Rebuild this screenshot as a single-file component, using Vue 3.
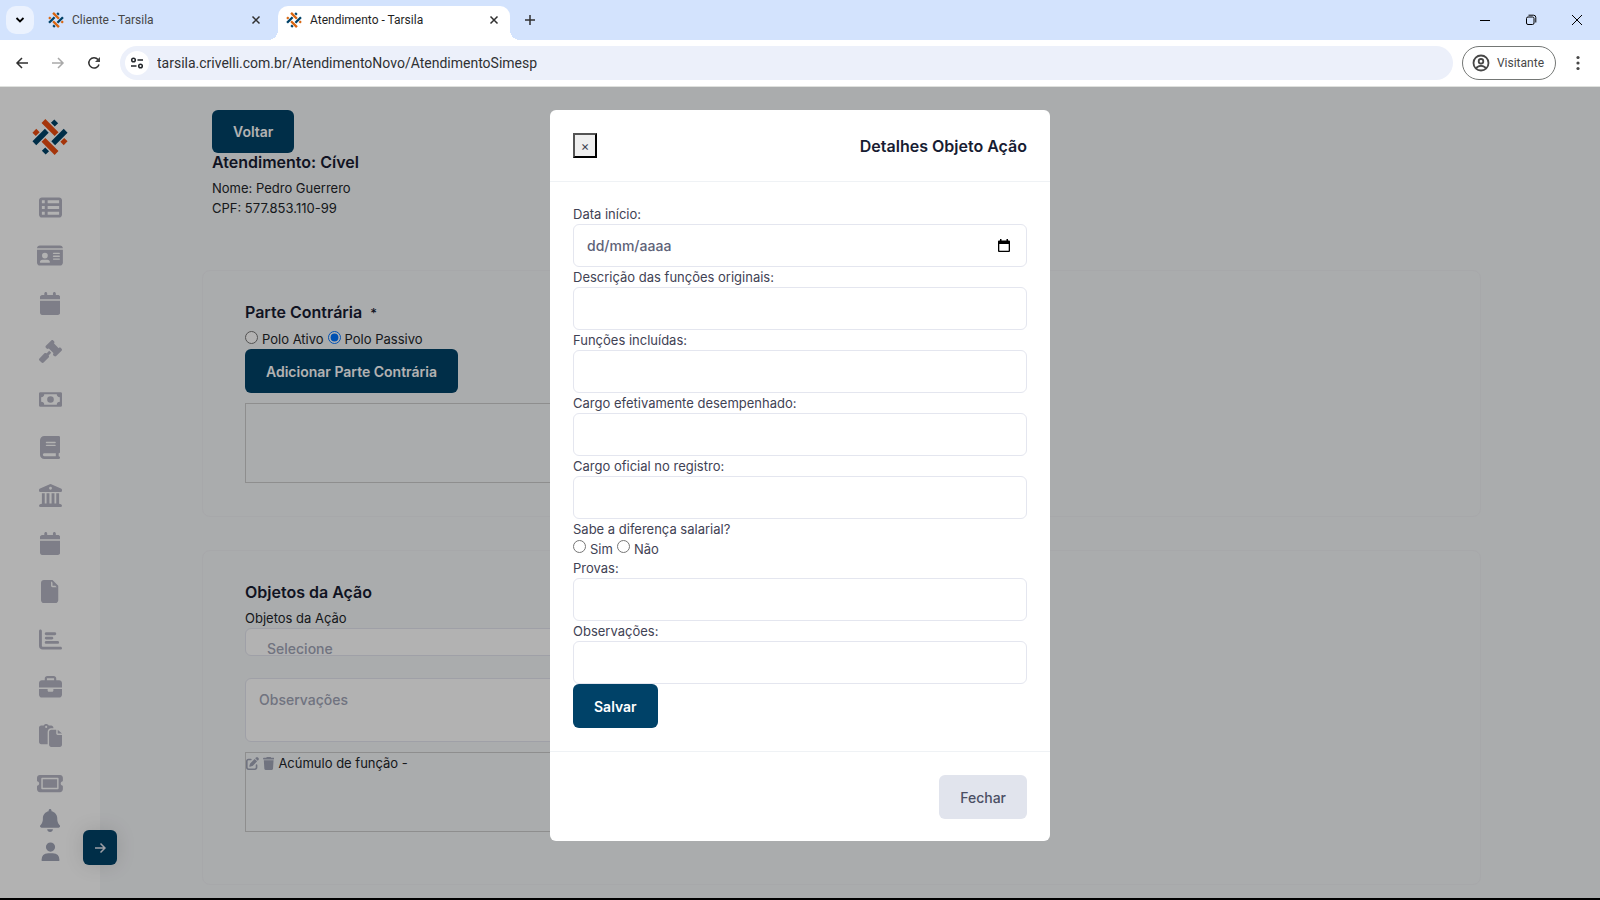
<template>
  <div class="browser">
    <header class="tab-strip">
      <button class="tab-search" type="button" aria-label="Pesquisar guias">
        <svg width="10" height="10" viewBox="0 0 10 10"><path d="M1.500 3L5 6.500L8.500 3" class="stroke thick" /></svg>
      </button>
      <div class="tabs">
        <div v-for="tab in tabs" :key="tab.title" class="tab" :class="{ active: tab.active }">
          <svg class="favicon" viewBox="96 101 105 107">
            <path class="logo-orange" d="M129 107L168 146M129 163L168 202" />
            <path class="logo-blue" d="M102 173L139 136M158 173L195 136" />
            <path class="logo-orange" d="M102 136L112 146M185 163L195 173" />
            <path class="logo-blue" d="M157 118L167 108M130 201L140 191" />
          </svg>
          <span class="tab-title">{{ tab.title }}</span>
          <button class="tab-close" type="button" aria-label="Fechar guia">
            <svg width="10" height="10" viewBox="0 0 10 10"><path d="M1.500 1.500L8.500 8.500M8.500 1.500L1.500 8.500" class="stroke" /></svg>
          </button>
        </div>
      </div>
      <button class="tab-new" type="button" aria-label="Nova guia">
        <svg width="12" height="12" viewBox="0 0 12 12"><path d="M6 1V11M1 6H11" class="stroke" /></svg>
      </button>
      <div class="window-controls">
        <button type="button" aria-label="Minimizar">
          <svg width="12" height="12" viewBox="0 0 12 12"><path d="M1 6.500H11" class="stroke thin" /></svg>
        </button>
        <button type="button" aria-label="Restaurar">
          <svg width="12" height="12" viewBox="0 0 12 12">
            <rect x="1.500" y="3" width="7.500" height="7.500" rx="1.500" class="stroke thin" />
            <path d="M3.500 1.200H8.500Q10.800 1.200 10.800 3.500V8.500" class="stroke thin" />
          </svg>
        </button>
        <button type="button" aria-label="Fechar janela">
          <svg width="12" height="12" viewBox="0 0 12 12"><path d="M1 1L11 11M11 1L1 11" class="stroke thin" /></svg>
        </button>
      </div>
    </header>

    <div class="toolbar">
      <button class="tool" type="button" aria-label="Voltar página">
        <svg width="16" height="16" viewBox="0 0 16 16"><path d="M14 8H3M8 3L3 8L8 13" class="stroke" /></svg>
      </button>
      <button class="tool disabled" type="button" aria-label="Avançar" disabled>
        <svg width="16" height="16" viewBox="0 0 16 16"><path d="M2 8H13M8 3L13 8L8 13" class="stroke" /></svg>
      </button>
      <button class="tool" type="button" aria-label="Recarregar">
        <svg width="16" height="16" viewBox="0 0 16 16">
          <path d="M13 9.500A5.200 5.200 0 1 1 12 4.500L13.300 6" class="stroke" />
          <path d="M14 2V7H9Z" />
        </svg>
      </button>
      <div class="address">
        <span class="site-info">
          <svg width="14" height="14" viewBox="0 0 14 14">
            <circle cx="3.500" cy="4" r="1.800" class="stroke" />
            <path d="M7.500 4H13M1 10H6.500" class="stroke" />
            <circle cx="10.500" cy="10" r="1.800" class="stroke" />
          </svg>
        </span>
        <input v-model="url" type="text" aria-label="Endereço" />
      </div>
      <button class="profile" type="button">
        <svg width="18" height="18" viewBox="0 0 18 18">
          <circle cx="9" cy="9" r="7.500" class="stroke thick" />
          <circle cx="9" cy="7.300" r="2.300" class="stroke thick" />
          <path d="M4 14Q9 9.500 14 14" class="stroke thick" />
        </svg>
        Visitante
      </button>
      <button class="tool menu" type="button" aria-label="Menu">
        <svg width="4" height="16" viewBox="0 0 4 16">
          <circle cx="2" cy="2.500" r="1.600" /><circle cx="2" cy="8" r="1.600" /><circle cx="2" cy="13.500" r="1.600" />
        </svg>
      </button>
    </div>

    <div class="page">
      <nav class="sidebar">
        <a href="#" class="logo" aria-label="Início">
          <svg viewBox="96 101 105 107">
            <path class="logo-orange" d="M129 107L168 146M129 163L168 202" />
            <path class="logo-blue" d="M102 173L139 136M158 173L195 136" />
            <path class="logo-orange" d="M102 136L112 146M185 163L195 173" />
            <path class="logo-blue" d="M157 118L167 108M130 201L140 191" />
          </svg>
        </a>
        <a v-for="item in menu" :key="item.label" href="#" class="menu-item" :aria-label="item.label">
          <svg :viewBox="`0 0 ${icons[item.icon].w} 512`"><path fill-rule="evenodd" :d="icons[item.icon].d" /></svg>
        </a>
        <a v-for="item in account" :key="item.label" href="#" class="menu-item small" :aria-label="item.label">
          <svg :viewBox="`0 0 ${icons[item.icon].w} 512`"><path fill-rule="evenodd" :d="icons[item.icon].d" /></svg>
        </a>
        <button class="sidebar-toggle" type="button" aria-label="Expandir menu">
          <svg width="12" height="12" viewBox="0 0 12 12"><path d="M1 6H11M6.500 1.500L11 6L6.500 10.500" /></svg>
        </button>
      </nav>

      <main class="content">
        <div class="intro">
          <button type="button" class="btn btn-primary">Voltar</button>
          <h3>Atendimento: Cível</h3>
          <div>Nome: Pedro Guerrero</div>
          <div>CPF: 577.853.110-99</div>
        </div>

        <section class="card">
          <h3>Parte Contrária <span class="required">*</span></h3>
          <div class="radios">
            <input id="polo-ativo" v-model="polo" type="radio" name="polo" value="ativo" />
            <label for="polo-ativo">Polo Ativo</label>
            <input id="polo-passivo" v-model="polo" type="radio" name="polo" value="passivo" />
            <label for="polo-passivo">Polo Passivo</label>
          </div>
          <button type="button" class="btn btn-primary">Adicionar Parte Contrária</button>
          <div class="list-box"></div>
        </section>

        <section class="card">
          <h3>Objetos da Ação</h3>
          <label for="objetos">Objetos da Ação</label>
          <select id="objetos">
            <option>Selecione</option>
          </select>
          <textarea placeholder="Observações" aria-label="Observações do atendimento"></textarea>
          <div class="list-box">
            <div class="list-row">
              <button type="button" aria-label="Editar">
                <svg viewBox="0 0 512 512"><path :d="icons.edit.d" /></svg>
              </button>
              <button type="button" aria-label="Excluir">
                <svg viewBox="0 0 448 512"><path :d="icons.trash.d" /></svg>
              </button>
              <span>Acúmulo de função -</span>
            </div>
          </div>
        </section>
      </main>

      <div class="overlay">
        <div class="modal" role="dialog" aria-labelledby="modal-title">
          <div class="modal-header">
            <button type="button" class="close" aria-label="Fechar">×</button>
            <h3 id="modal-title">Detalhes Objeto Ação</h3>
          </div>
          <form class="modal-body" @submit.prevent>
            <label for="data-inicio">Data início:</label>
            <div class="form-control date">
              <input id="data-inicio" type="text" placeholder="dd/mm/aaaa" />
              <button type="button" aria-label="Abrir calendário">
                <svg width="14" height="14" viewBox="0 0 14 14">
                  <path fill-rule="evenodd" d="M3 0H4.500V1.500H9.500V0H11V1.500H12Q13 1.500 13 2.500V12Q13 13 12 13H2Q1 13 1 12V2.500Q1 1.500 2 1.500H3ZM2.300 5V11.700H11.700V5Z" />
                </svg>
              </button>
            </div>
            <template v-for="field in fields" :key="field.id">
              <label :for="field.id">{{ field.label }}</label>
              <input :id="field.id" class="form-control" type="text" />
            </template>
            <fieldset>
              <legend>Sabe a diferença salarial?</legend>
              <div class="radios">
                <input id="dif-sim" type="radio" name="diferenca" value="sim" />
                <label for="dif-sim">Sim</label>
                <input id="dif-nao" type="radio" name="diferenca" value="nao" />
                <label for="dif-nao">Não</label>
              </div>
            </fieldset>
            <label for="provas">Provas:</label>
            <input id="provas" class="form-control" type="text" />
            <label for="observacoes">Observações:</label>
            <input id="observacoes" class="form-control" type="text" />
            <button type="submit" class="btn btn-primary">Salvar</button>
          </form>
          <div class="modal-footer">
            <button type="button" class="btn btn-light">Fechar</button>
          </div>
        </div>
      </div>
    </div>
  </div>
</template>

<script setup>
import { ref } from 'vue';

const url = ref('tarsila.crivelli.com.br/AtendimentoNovo/AtendimentoSimesp');
const polo = ref('passivo');

const tabs = [
  { title: 'Cliente - Tarsila', active: false },
  { title: 'Atendimento - Tarsila', active: true }
];

const fields = [
  { id: 'descricao', label: 'Descrição das funções originais:' },
  { id: 'funcoes', label: 'Funções incluídas:' },
  { id: 'cargo-efetivo', label: 'Cargo efetivamente desempenhado:' },
  { id: 'cargo-oficial', label: 'Cargo oficial no registro:' }
];

const menu = [
  { icon: 'list', label: 'Atendimentos' },
  { icon: 'card', label: 'Clientes' },
  { icon: 'calendar', label: 'Agenda' },
  { icon: 'gavel', label: 'Processos' },
  { icon: 'money', label: 'Financeiro' },
  { icon: 'book', label: 'Biblioteca' },
  { icon: 'landmark', label: 'Tribunais' },
  { icon: 'calendar', label: 'Prazos' },
  { icon: 'file', label: 'Documentos' },
  { icon: 'chart', label: 'Relatórios' },
  { icon: 'briefcase', label: 'Escritório' },
  { icon: 'paste', label: 'Modelos' },
  { icon: 'ticket', label: 'Chamados' }
];

const account = [
  { icon: 'bell', label: 'Notificações' },
  { icon: 'user', label: 'Usuário' }
];

const icons = {
  list: {
    w: 512,
    d: 'M0 96C0 60.7 28.7 32 64 32H448c35.300 0 64 28.700 64 64V416c0 35.300-28.700 64-64 64H64c-35.300 0-64-28.700-64-64V96zm64 0v64h64V96H64zm384 0H192v64H448V96zM64 224v64h64V224H64zm384 0H192v64H448V224zM64 352v64h64V352H64zm384 0H192v64H448V352z'
  },
  card: {
    w: 576,
    d: 'M0 96l576 0c0-35.300-28.700-64-64-64H64C28.700 32 0 60.700 0 96zm0 32V416c0 35.300 28.700 64 64 64H512c35.300 0 64-28.700 64-64V128H0zM64 405.300c0-29.500 23.900-53.300 53.300-53.300H234.700c29.500 0 53.300 23.900 53.300 53.300c0 5.900-4.800 10.700-10.700 10.700H74.700c-5.900 0-10.700-4.800-10.700-10.700zM176 192a64 64 0 1 1 0 128 64 64 0 1 1 0-128zm176 16c0-8.800 7.200-16 16-16H496c8.800 0 16 7.200 16 16s-7.200 16-16 16H368c-8.800 0-16-7.200-16-16zm0 64c0-8.800 7.200-16 16-16H496c8.800 0 16 7.200 16 16s-7.200 16-16 16H368c-8.800 0-16-7.200-16-16zm0 64c0-8.800 7.200-16 16-16H496c8.800 0 16 7.200 16 16s-7.200 16-16 16H368c-8.800 0-16-7.200-16-16z'
  },
  calendar: {
    w: 448,
    d: 'M96 32V64H48C21.500 64 0 85.500 0 112v48H448V112c0-26.500-21.500-48-48-48H352V32c0-17.700-14.300-32-32-32s-32 14.300-32 32V64H160V32c0-17.700-14.300-32-32-32S96 14.300 96 32zM448 192H0V464c0 26.500 21.500 48 48 48H400c26.500 0 48-21.500 48-48V192z'
  },
  gavel: {
    w: 512,
    d: 'M318.600 9.400c-12.500-12.500-32.800-12.500-45.300 0l-120 120c-12.500 12.500-12.500 32.800 0 45.300l16 16c12.500 12.500 32.800 12.500 45.300 0l4-4L325.400 293.400l-4 4c-12.500 12.500-12.500 32.800 0 45.300l16 16c12.500 12.500 32.800 12.500 45.300 0l120-120c12.500-12.500 12.500-32.800 0-45.300l-16-16c-12.500-12.500-32.800-12.500-45.300 0l-4 4L330.600 74.600l4-4c12.500-12.500 12.500-32.800 0-45.300l-16-16zm-152 288c-12.500-12.500-32.800-12.500-45.300 0l-112 112c-12.500 12.500-12.500 32.800 0 45.300l48 48c12.500 12.500 32.800 12.500 45.300 0l112-112c12.500-12.500 12.500-32.800 0-45.300l-1.400-1.400L272 285.300 226.700 240 168 298.700l-1.400-1.400z'
  },
  money: {
    w: 512,
    d: 'M32 92H480Q512 92 512 124V388Q512 420 480 420H32Q0 420 0 388V124Q0 92 32 92ZM116 140Q116 200 48 204V308Q116 312 116 372H396Q396 312 464 308V204Q396 200 396 140ZM256 182a74 74 0 1 1 0 148a74 74 0 1 1 0-148Z'
  },
  book: {
    w: 448,
    d: 'M96 0C43 0 0 43 0 96V416c0 53 43 96 96 96H384h32c17.700 0 32-14.300 32-32s-14.300-32-32-32V384c17.700 0 32-14.300 32-32V32c0-17.700-14.300-32-32-32H384 96zm0 384H352v64H96c-17.700 0-32-14.300-32-32s14.300-32 32-32zm32-240c0-8.800 7.200-16 16-16H336c8.800 0 16 7.200 16 16s-7.200 16-16 16H144c-8.800 0-16-7.200-16-16zm16 48H336c8.800 0 16 7.200 16 16s-7.200 16-16 16H144c-8.800 0-16-7.200-16-16s7.200-16 16-16z'
  },
  landmark: {
    w: 512,
    d: 'M240 6Q256-4 272 6L488 102Q512 112 512 136V148Q512 176 484 176H28Q0 176 0 148V136Q0 112 24 102ZM256 62a32 32 0 1 1 0 64a32 32 0 1 1 0-64ZM64 208H128V432H168V208H232V432H280V208H344V432H384V208H448V440L490 452Q512 464 512 488Q508 512 480 512H32Q4 512 0 488Q0 464 22 452L64 440Z'
  },
  file: {
    w: 384,
    d: 'M0 64C0 28.700 28.700 0 64 0H224V128c0 17.700 14.300 32 32 32H384V448c0 35.300-28.700 64-64 64H64c-35.300 0-64-28.700-64-64V64zM224 0H256L384 128V160H350L256 62V128H320L224 30Z'
  },
  chart: {
    w: 512,
    d: 'M32 32c17.700 0 32 14.300 32 32V400c0 8.800 7.200 16 16 16H480c17.700 0 32 14.300 32 32s-14.300 32-32 32H80c-44.200 0-80-35.800-80-80V64C0 46.300 14.300 32 32 32zm96 96c0-17.700 14.300-32 32-32l192 0c17.700 0 32 14.300 32 32s-14.300 32-32 32l-192 0c-17.700 0-32-14.300-32-32zm32 64H288c17.700 0 32 14.300 32 32s-14.300 32-32 32H160c-17.700 0-32-14.300-32-32s14.300-32 32-32zm0 96H416c17.700 0 32 14.300 32 32s-14.300 32-32 32H160c-17.700 0-32-14.300-32-32s14.300-32 32-32z'
  },
  briefcase: {
    w: 512,
    d: 'M184 48H328c4.400 0 8 3.600 8 8V96H176V56c0-4.400 3.600-8 8-8zm-56 8V96H64C28.700 96 0 124.700 0 160v96H512V160c0-35.300-28.700-64-64-64H384V56c0-30.900-25.100-56-56-56H184c-30.900 0-56 25.100-56 56zM512 288H320v32c0 17.700-14.300 32-32 32H224c-17.700 0-32-14.300-32-32V288H0V416c0 35.300 28.700 64 64 64H448c35.300 0 64-28.700 64-64V288z'
  },
  paste: {
    w: 512,
    d: 'M160 0c-23.700 0-44.400 12.900-55.400 32H48C21.500 32 0 53.500 0 80V400c0 26.500 21.500 48 48 48H192V176c0-44.200 35.800-80 80-80h48V80c0-26.500-21.500-48-48-48H215.400C204.400 12.900 183.700 0 160 0zM272 128c-26.500 0-48 21.500-48 48V464c0 26.500 21.500 48 48 48H464c26.500 0 48-21.500 48-48V243.900H416c-17.700 0-32-14.300-32-32V128H272zM160 40a24 24 0 1 1 0 48 24 24 0 1 1 0-48zM416 128V212H512L416 128Z'
  },
  ticket: {
    w: 576,
    d: 'M64 64C28.700 64 0 92.700 0 128v64c0 8.800 7.400 15.700 15.700 18.600C34.500 217.100 48 235 48 256s-13.500 38.900-32.300 45.400C7.400 304.300 0 311.200 0 320v64c0 35.300 28.700 64 64 64H512c35.300 0 64-28.700 64-64V320c0-8.800-7.400-15.700-15.700-18.600C541.500 294.900 528 277 528 256s13.500-38.900 32.300-45.400c8.300-2.900 15.700-9.800 15.700-18.600V128c0-35.300-28.700-64-64-64H64zM112 128H464Q480 128 480 144V368Q480 384 464 384H112Q96 384 96 368V144Q96 128 112 128ZM128 160V352H448V160Z'
  },
  bell: {
    w: 448,
    d: 'M224 0c-17.700 0-32 14.300-32 32V51.200C119 66 64 130.600 64 208v18.800c0 47-17.300 92.400-48.500 127.600l-7.400 8.300c-8.400 9.400-10.400 22.900-5.300 34.400S19.400 416 32 416H416c12.600 0 24-7.400 29.200-18.900s3.100-25-5.300-34.400l-7.400-8.300C401.300 319.200 384 273.900 384 226.800V208c0-77.400-55-142-128-156.800V32c0-17.700-14.300-32-32-32zm45.300 493.300c12-12 18.700-28.300 18.700-45.300H160c0 17 6.700 33.300 18.700 45.300s28.300 18.700 45.300 18.700s33.300-6.700 45.300-18.700z'
  },
  user: {
    w: 512,
    d: 'M256 56a102 102 0 1 1 0 204a102 102 0 1 1 0-204ZM56 452Q56 296 206 296H306Q456 296 456 452Q456 468 440 468H72Q56 468 56 452Z'
  },
  edit: {
    d: 'M471.600 21.700c-21.900-21.900-57.300-21.900-79.200 0L362.300 51.700l97.900 97.900 30.100-30.100c21.900-21.900 21.900-57.300 0-79.200L471.600 21.700zm-299.200 220c-6.100 6.100-10.800 13.600-13.500 21.900l-29.600 88.800c-2.900 8.600-.6 18.100 5.800 24.600s15.900 8.700 24.600 5.800l88.800-29.600c8.200-2.700 15.700-7.400 21.900-13.500L437.700 172.300 339.700 74.300 172.400 241.700zM96 64C43 64 0 107 0 160V416c0 53 43 96 96 96H352c53 0 96-43 96-96V320c0-17.700-14.300-32-32-32s-32 14.300-32 32v96c0 17.700-14.300 32-32 32H96c-17.700 0-32-14.300-32-32V160c0-17.700 14.300-32 32-32h96c17.700 0 32-14.300 32-32s-14.300-32-32-32H96z'
  },
  trash: {
    d: 'M135.200 17.700L128 32H32C14.300 32 0 46.300 0 64S14.300 96 32 96H416c17.700 0 32-14.300 32-32s-14.300-32-32-32H320l-7.200-14.300C307.400 6.800 296.300 0 284.200 0H163.800c-12.100 0-23.200 6.800-28.600 17.700zM416 128H32L53.200 467c1.600 25.300 22.600 45 47.900 45H346.900c25.300 0 46.300-19.700 47.900-45L416 128z'
  }
};
</script>

<style>
body {
  background: #000;
}
</style>

<style scoped>
* {
  box-sizing: border-box;
}

button, input, select, textarea {
  font-family: inherit;
}

button {
  border: none;
  background: none;
  padding: 0;
  cursor: pointer;
}

.browser {
  display: flex;
  flex-direction: column;
  height: 100vh;
  padding-bottom: 2px;
  overflow: hidden;
  background: #000;
  font-family: Inter, "Liberation Sans", sans-serif;
  font-size: 13px;
  line-height: 20px;
  color: #212529;
}

.stroke {
  fill: none;
  stroke: currentColor;
  stroke-width: 1.5;
}

.stroke.thick {
  stroke-width: 1.8;
}

.stroke.thin {
  stroke-width: 1;
}

.logo-orange, .logo-blue {
  fill: none;
  stroke: #ec4d10;
  stroke-width: 16;
}

.logo-blue {
  stroke: #004268;
}

/* Tab strip */
.tab-strip {
  display: flex;
  align-items: center;
  height: 40px;
  flex-shrink: 0;
  padding-left: 6px;
  background: #d3e3fd;
  font-family: Roboto, "Open Sans", sans-serif;
  font-size: 12px;
  color: #1f1f1f;
}

.tab-search {
  display: flex;
  align-items: center;
  justify-content: center;
  width: 28px;
  height: 28px;
  border-radius: 10px;
  background: #ebf2fe;
}

.tabs {
  display: flex;
  align-self: stretch;
  padding-top: 6px;
  margin-left: 4px;
}

.tab {
  position: relative;
  display: flex;
  align-items: center;
  width: 240px;
  padding: 0 17px 6px 10px;
  color: #474747;
}

.tab.active {
  width: 232px;
  padding: 0 11px 6px 8px;
  border-radius: 10px 10px 0 0;
  background: #fff;
  color: #1f1f1f;
}

.tab.active::before, .tab.active::after {
  content: '';
  position: absolute;
  bottom: 0;
  width: 10px;
  height: 10px;
}

.tab.active::before {
  left: -10px;
  background: radial-gradient(circle at 0 0, #d3e3fd 10px, #fff 10px);
}

.tab.active::after {
  right: -10px;
  background: radial-gradient(circle at 100% 0, #d3e3fd 10px, #fff 10px);
}

.favicon {
  width: 16px;
  height: 16px;
}

.favicon .logo-orange {
  stroke: #d9650f;
}

.tab-title {
  flex: 1;
  margin-left: 8px;
}

.tab-close, .tab-new, .tool {
  display: flex;
  align-items: center;
  justify-content: center;
  color: #303030;
}

.tab-new {
  width: 28px;
  height: 28px;
  margin-left: 6px;
}

.window-controls {
  display: flex;
  margin-left: auto;
}

.window-controls button {
  display: flex;
  align-items: center;
  justify-content: center;
  width: 46px;
  height: 40px;
}

/* Toolbar */
.toolbar {
  display: flex;
  align-items: center;
  height: 47px;
  flex-shrink: 0;
  padding: 0 8px 0 4px;
  border-bottom: 1px solid #dfe1de;
  background: #fff;
}

.tool {
  width: 36px;
  height: 34px;
}

.tool svg {
  fill: #474747;
}

.tool.disabled {
  color: #a9a9a9;
}

.tool.menu {
  width: 28px;
  margin-left: 8px;
}

.address {
  display: flex;
  align-items: center;
  flex: 1;
  height: 34px;
  margin: 0 9px 0 8px;
  padding: 0 16px 0 5px;
  border-radius: 17px;
  background: #ecf0fa;
}

.site-info {
  display: flex;
  align-items: center;
  justify-content: center;
  width: 24px;
  height: 24px;
  border-radius: 50%;
  background: #fff;
}

.address input {
  flex: 1;
  margin-left: 8px;
  padding: 0;
  border: none;
  background: none;
  outline: none;
  font-family: Roboto, "Open Sans", sans-serif;
  font-size: 14px;
  color: #2f3033;
}

.profile {
  display: flex;
  align-items: center;
  gap: 7px;
  height: 34px;
  padding: 0 11px 0 9px;
  border: 1px solid #747775;
  border-radius: 17px;
  font-family: Roboto, "Open Sans", sans-serif;
  font-size: 12px;
  color: #474747;
}

/* Page */
.page {
  position: relative;
  display: flex;
  flex: 1;
  min-height: 0;
  overflow: hidden;
  background: #f4f6f8;
}

.sidebar {
  position: relative;
  display: flex;
  flex-direction: column;
  align-items: center;
  width: 100px;
  flex-shrink: 0;
  padding-top: 32px;
  background: #fff;
}

.logo {
  height: 64px;
}

.logo svg {
  width: 36px;
  height: 36px;
}

.menu-item {
  display: flex;
  align-items: center;
  justify-content: center;
  width: 48px;
  height: 48px;
  flex-shrink: 0;
}

.menu-item svg {
  height: 23px;
  fill: #b5b5c3;
}

.menu-item.small {
  height: 31px;
}

.menu-item.small svg {
  fill: #a1a5b7;
}

.menu-item:nth-last-child(3) {
  margin-top: -2px;
}

.sidebar-toggle {
  position: absolute;
  right: -17px;
  bottom: 33px;
  display: flex;
  align-items: center;
  justify-content: center;
  width: 34px;
  height: 35px;
  border-radius: 6px;
  background: #004268;
  box-shadow: 0 0 20px rgba(0, 0, 0, 0.12);
}

.sidebar-toggle svg {
  fill: none;
  stroke: #e4e6ef;
  stroke-width: 1.5;
}

.content {
  flex: 1;
  padding: 23px 119px 0 102px;
}

.intro {
  padding: 0 10px;
  margin-bottom: 52px;
}

h3 {
  margin: 0 0 7px;
  font-size: 16px;
  font-weight: 600;
  line-height: 18px;
  color: #181c32;
}

.required {
  margin-left: 4px;
  font-size: 13px;
  font-weight: 500;
}

.btn {
  display: block;
  height: 44px;
  padding: 0 21px;
  border-radius: 6px;
  font-size: 14px;
  font-weight: 600;
}

.intro .btn {
  height: 43px;
}

.btn-primary {
  background: #004268;
  color: #fff;
}

.btn-light {
  background: #e1e4ed;
  color: #4b4f64;
  font-weight: 500;
}

.card {
  margin-bottom: 33px;
  padding: 32px 42px 33px;
  border: 1px solid #f0f1f4;
  border-radius: 8px;
}

.card:last-child {
  padding-bottom: 52px;
}

.radios {
  display: flex;
  align-items: center;
  gap: 4px;
}

.radios input {
  width: 13px;
  height: 13px;
  margin: 0 0 4px;
}

.list-box {
  width: 50%;
  height: 80px;
  margin-top: 10px;
  border: 1px solid #ccc;
}

.list-row {
  display: flex;
  align-items: center;
  gap: 4px;
}

.list-row svg {
  display: block;
  height: 13px;
  fill: #a1a5b7;
}

.card select, .card textarea {
  display: block;
  width: 50%;
  border: 1px solid #e4e6ef;
  border-radius: 6px;
  background: #fff;
  font-size: 14px;
  font-weight: 500;
  color: #a1a5b7;
}

.card select {
  appearance: none;
  height: 28px;
  padding: 12px 21px 0;
  line-height: 16px;
}

.card textarea {
  height: 64px;
  margin-top: 22px;
  padding: 10px 13px;
  line-height: 22px;
  resize: none;
}

.card textarea::placeholder {
  color: #a1a5b7;
}

/* Modal */
.overlay {
  position: absolute;
  inset: 0;
  display: flex;
  align-items: flex-start;
  justify-content: center;
  padding-top: 23px;
  background: rgba(0, 0, 0, 0.3);
}

.modal {
  width: 500px;
  border-radius: 6px;
  background: #fff;
  color: #3f4254;
}

.modal-header {
  display: flex;
  align-items: center;
  justify-content: space-between;
  height: 72px;
  padding: 0 23px;
  border-bottom: 1px solid #eff2f5;
}

.modal-header h3 {
  margin: 0;
}

.close {
  width: 24px;
  height: 25px;
  border: 2px outset #000;
  background: #efefef;
  font-size: 13px;
  color: #3f4254;
}

.modal-body {
  padding: 22px 23px 23px;
}

.modal-body > label, .modal-body legend {
  display: block;
  padding: 0;
}

fieldset {
  margin: 0;
  padding: 0;
  border: none;
}

fieldset .radios {
  height: 19px;
}

.form-control {
  display: block;
  width: 100%;
  height: 43px;
  padding: 0 13px;
  border: 1px solid #e4e6ef;
  border-radius: 6px;
  outline: none;
  font-size: 14px;
  font-weight: 500;
  color: #5e6278;
}

.date {
  display: flex;
  align-items: center;
  padding-right: 15px;
}

.date input {
  flex: 1;
  padding: 0;
  border: none;
  outline: none;
  font-size: 14px;
  font-weight: 500;
}

.date input::placeholder {
  color: #5e6278;
}

.date svg {
  display: block;
}

.modal-footer {
  display: flex;
  justify-content: flex-end;
  padding: 23px 23px 22px;
  border-top: 1px solid #eff2f5;
}
</style>
